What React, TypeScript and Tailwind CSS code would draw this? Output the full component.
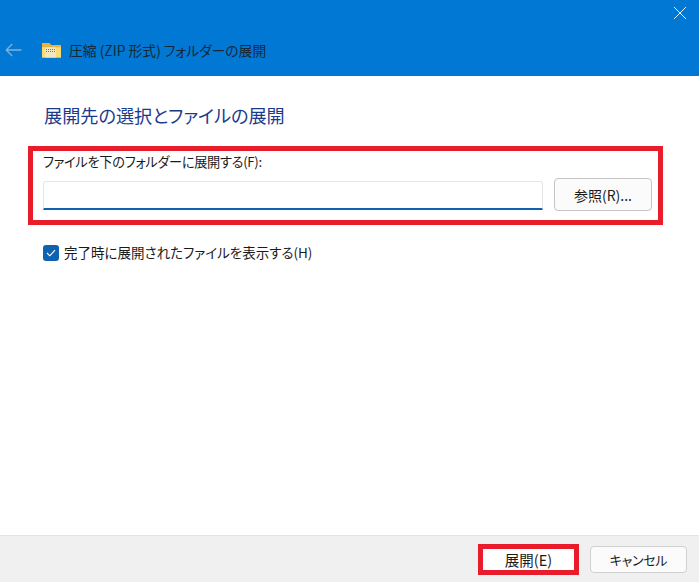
import React from "react";

const font = { fontFamily: '"Noto Sans CJK JP", sans-serif' };

export default function App() {
  return (
    <div style={font} className="w-[699px] h-[582px] flex flex-col bg-white overflow-hidden text-[#1a1a1a] [font-feature-settings:'palt']">
      <header className="h-[76px] bg-[#0078d4] flex flex-col shrink-0">
        <div className="h-[30px] flex justify-end pr-[12px] pt-[6px]">
          <svg width="14" height="14" viewBox="0 0 14 14" fill="none" stroke="#e8f3fb" strokeWidth="1">
            <path d="M1 1 L13 13 M13 1 L1 13" />
          </svg>
        </div>
        <div className="flex items-center mt-[8px] h-[24px]">
          <svg className="ml-[5px]" width="17" height="14" viewBox="0 0 17 14" fill="none" stroke="#82b0d6" strokeWidth="1.3">
            <path d="M16.5 7 H1.2 M7.2 1 L1.2 7 L7.2 13" />
          </svg>
          <svg className="ml-[20px]" width="19" height="16" viewBox="0 0 19 16">
            <path d="M0 1 H7 L9 3 H19 V15.5 H0 Z" fill="#f3c94f" />
            <path d="M0 1 H7 L9 3 H19 V5 H0 Z" fill="#e6b445" />
            <path d="M0 5.5 H19 V15.5 H0 Z" fill="#fbdc74" />
            <rect x="3" y="5.5" width="11" height="10" fill="#f1e6bd" />
            <path d="M4 7.5 H14 M4 9.5 H14" stroke="#77776c" strokeWidth="1" strokeDasharray="1 1" />
          </svg>
          <span className="ml-[8px] text-[13.8px] leading-[24px] text-[#16283a] whitespace-nowrap">
            圧縮 (ZIP 形式) フォルダーの展開
          </span>
        </div>
      </header>

      <main className="flex-1 flex flex-col">
        <h1 className="ml-[44px] mt-[26px] text-[18.15px] leading-[26px] font-normal text-[#1c3a8c] whitespace-nowrap">
          展開先の選択とファイルの展開
        </h1>

        <section className="ml-[28px] mt-[18px] w-[635px] h-[79px] border-[5px] border-[#e81c2a] pl-[10px] pr-[6px] flex flex-col">
          <label className="text-[13.2px] leading-[20px] mt-[1px] tracking-[-0.3px] whitespace-nowrap">
            ファイルを下のフォルダーに展開する(F):
          </label>
          <div className="flex items-start mt-[6px]">
            <div className="w-[500px] h-[29px] mt-[3px] bg-white border border-[#e6e6e6] border-b-2 border-b-[#0f62b0] rounded-t-[3px]" />
            <button className="ml-[11px] w-[98px] h-[33px] rounded-[4px] border border-[#c4c4c4] bg-[#fbfbfb] text-[14px] leading-[30px] text-center">
              参照(R)...
            </button>
          </div>
        </section>

        <div className="ml-[43px] mt-[20px] flex items-center h-[16px]">
          <span className="w-[16px] h-[16px] rounded-[3px] bg-[#0f62b0] flex items-center justify-center">
            <svg width="10" height="8" viewBox="0 0 10 8" fill="none" stroke="#ffffff" strokeWidth="1.1">
              <path d="M1 4 L3.8 6.8 L9 1.2" />
            </svg>
          </span>
          <span className="ml-[5px] text-[13.5px] leading-[20px] whitespace-nowrap relative -top-px">
            完了時に展開されたファイルを表示する(H)
          </span>
        </div>
      </main>

      <footer className="h-[47px] bg-[#f0f0f0] border-t border-[#e3e3e3] flex items-center justify-end pr-[12px] shrink-0">
        <button className="w-[101px] h-[31px] border-[5px] border-[#e81c2a] bg-white text-[14.5px] leading-[21px] text-center">
          展開(E)
        </button>
        <button className="ml-[11px] w-[97px] h-[27px] rounded-[4px] border border-[#d0d0d0] bg-[#fbfbfb] text-[13px] tracking-[-0.3px] leading-[25px] text-center">
          キャンセル
        </button>
      </footer>
    </div>
  );
}
